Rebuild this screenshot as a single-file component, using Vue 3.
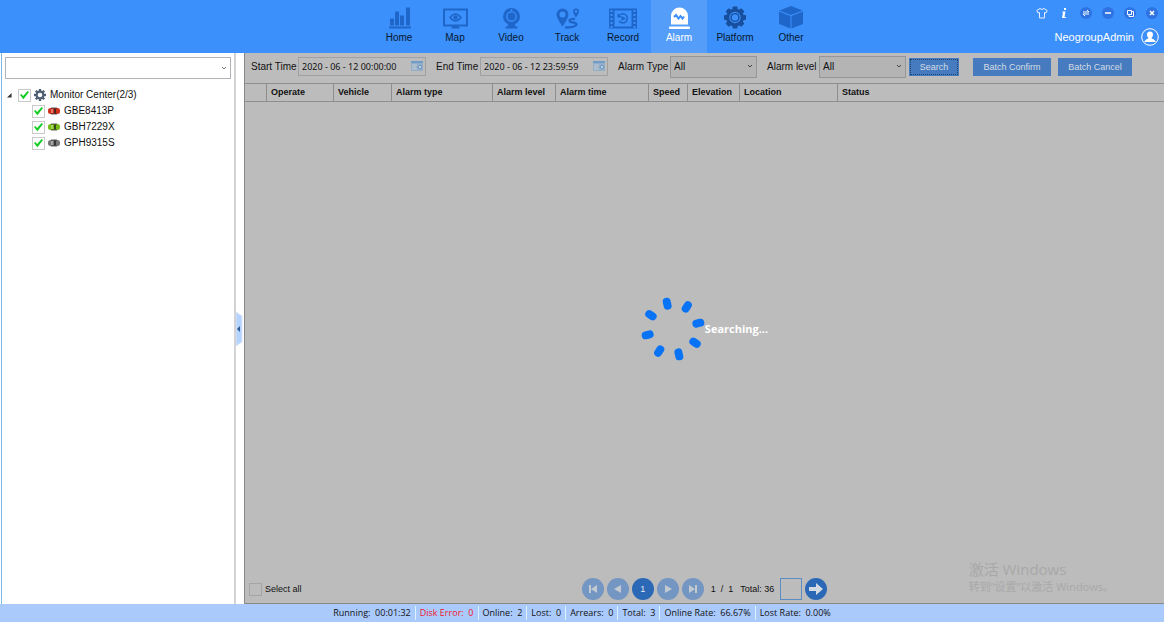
<script setup>
import { ref } from 'vue'

const nav = ['Home', 'Map', 'Video', 'Track', 'Record', 'Alarm', 'Platform', 'Other']
const active = ref('Alarm')
const vehicles = ref([
  { plate: 'GBE8413P', tone: 'red', on: true },
  { plate: 'GBH7229X', tone: 'green', on: true },
  { plate: 'GPH9315S', tone: 'grey', on: true }
])
const allOn = ref(true)
const selectAll = ref(false)
const group = ref('')
const start = ref('2020 - 06 - 12 00:00:00')
const end = ref('2020 - 06 - 12 23:59:59')
const page = ref('')
const columns = [
  { name: '', size: 'c-mark' },
  { name: 'Operate', size: 'c-operate' },
  { name: 'Vehicle', size: 'c-vehicle' },
  { name: 'Alarm type', size: 'c-type' },
  { name: 'Alarm level', size: 'c-level' },
  { name: 'Alarm time', size: 'c-time' },
  { name: 'Speed', size: 'c-speed' },
  { name: 'Elevation', size: 'c-elevation' },
  { name: 'Location', size: 'c-location' },
  { name: 'Status', size: 'rest' }
]
const status = [
  ['Running:', '00:01:32'],
  ['Disk Error:', '0'],
  ['Online:', '2'],
  ['Lost:', '0'],
  ['Arrears:', '0'],
  ['Total:', '3'],
  ['Online Rate:', '66.67%'],
  ['Lost Rate:', '0.00%']
]
const teeth = [0, 45, 90, 135, 180, 225, 270, 315]
const holes = [5, 9, 13, 17, 21]
</script>

<template>
  <div class="app">
    <header class="top">
      <nav class="nav">
        <button v-for="n in nav" :key="n" type="button" class="tab" :class="{ active: n === active }" @click="active = n">
          <svg class="tab-icon" viewBox="0 0 28 24" fill="#1f66ca" aria-hidden="true">
            <g v-if="n === 'Home'">
              <rect x="5" y="13" width="4" height="7" /><rect x="10" y="6" width="4" height="14" />
              <rect x="15" y="10" width="4" height="10" /><rect x="21" y="2" width="4" height="18" />
              <rect x="4" y="21" width="22" height="2" />
            </g>
            <g v-else-if="n === 'Map'">
              <rect x="3" y="4" width="23" height="16" fill="none" stroke="#1f66ca" stroke-width="2" />
              <path d="M9 12Q14.5 5 20 12Q14.5 19 9 12Z" fill="none" stroke="#1f66ca" stroke-width="1.5" />
              <circle cx="14.5" cy="12" r="2.3" /><path d="M12 20h5l2 3h-9z" />
            </g>
            <g v-else-if="n === 'Video'">
              <circle cx="14.5" cy="11" r="8.5" /><circle cx="14.5" cy="11" r="5.3" fill="#3b90fb" />
              <circle cx="14.5" cy="11" r="4" />
              <circle cx="14.5" cy="4.5" r="1" fill="#3b90fb" />
              <path d="M11.500 18h6l1 3h2v2H8.500v-2h2z" />
            </g>
            <g v-else-if="n === 'Track'">
              <path fill-rule="evenodd" d="M9.5 3a6 6 0 0 1 6 6c0 4-6 12-6 12s-6-8-6-12a6 6 0 0 1 6-6zm0 3a3 3 0 1 0 0 6a3 3 0 0 0 0-6z" />
              <path fill-rule="evenodd" d="M23 3a3 3 0 0 1 3 3c0 2-3 6-3 6s-3-4-3-6a3 3 0 0 1 3-3zm0 1.700a1.300 1.300 0 1 0 0 2.600a1.300 1.300 0 0 0 0-2.600z" />
              <path d="M22 13.500c-8-.5-6 3-2 3.500c6 .8 5 5-8 5" fill="none" stroke="#1f66ca" stroke-width="2.300" />
            </g>
            <g v-else-if="n === 'Record'">
              <path fill-rule="evenodd" d="M0 3h28v20H0zM5.500 5v16h17V5z" />
              <g v-for="y in holes" :key="y" fill="#3b90fb">
                <rect x="1.500" :y="y - 0.500" width="2" height="2" /><rect x="24.500" :y="y - 0.500" width="2" height="2" />
              </g>
              <path d="M10.500 9.500a4.600 4.600 0 1 1 -.5 6" fill="none" stroke="#1f66ca" stroke-width="1.500" />
              <path d="M8.500 7.500v4.500h4.500zM12.500 10.500l4.500 2.500l-4.500 2.500z" />
            </g>
            <g v-else-if="n === 'Alarm'" fill="#fff">
              <path d="M6 19V10.500a8.500 8.500 0 0 1 17 0V19z" /><rect x="4" y="21" width="21" height="2.500" rx="1" />
              <path d="M9 11.500l2-2l2.500 3.500l2-2.500l2 2.500l1.500-2" fill="none" stroke="#3b90fb" stroke-width="2" />
            </g>
            <g v-else-if="n === 'Platform'" fill="#174e9d" transform="translate(14 12)">
              <circle r="9" />
              <rect v-for="t in teeth" :key="t" x="-2.500" y="-11" width="5" height="5" rx="1" :transform="`rotate(${t})`" />
              <circle r="5.700" fill="#3b90fb" /><circle r="4.600" /><circle r="3.200" fill="#3b90fb" />
            </g>
            <g v-else>
              <path d="M14 0.500L25.500 5L14 9.500L2.500 5Z" /><path d="M2 6L13.500 10.500V23L2 18.500Z" /><path d="M14.500 10.500L26 6V18.500L14.500 23Z" />
            </g>
          </svg>
          <span>{{ n }}</span>
        </button>
      </nav>
      <div class="corner">
        <div class="tools">
          <button type="button" aria-label="Skin">
            <svg viewBox="0 0 12 12"><path d="M4 1.500L.8 3.500L2 6L3.500 5.500V11H8.500V5.500L10 6L11.200 3.500L8 1.500Q6 3.500 4 1.500Z" fill="none" stroke="#e6f1ff" /></svg>
          </button>
          <button type="button" aria-label="About">
            <svg viewBox="0 0 12 12"><path d="M6 1h2v2H6zM4.500 4.500h3L6.500 10H8v1H4l1-5.500h-.8z" fill="#fff" /></svg>
          </button>
          <button type="button" aria-label="Switch">
            <svg viewBox="0 0 12 12"><circle cx="6" cy="6" r="6" fill="#2f72e2" /><path d="M3 5h6L7 3M9 7H3l2 2" fill="none" stroke="#fff" /></svg>
          </button>
          <button type="button" aria-label="Minimize">
            <svg viewBox="0 0 12 12"><circle cx="6" cy="6" r="6" fill="#2f72e2" /><path d="M3 6h6" stroke="#fff" stroke-width="1.500" /></svg>
          </button>
          <button type="button" aria-label="Restore">
            <svg viewBox="0 0 12 12"><circle cx="6" cy="6" r="6" fill="#2f72e2" /><path d="M3.500 3.500h4v4h-4zM5 8v1.500h4.500v-5H8" fill="none" stroke="#fff" /></svg>
          </button>
          <button type="button" aria-label="Close">
            <svg viewBox="0 0 12 12"><circle cx="6" cy="6" r="6" fill="#2f72e2" /><path d="M4 4l4 4M8 4L4 8" stroke="#fff" stroke-width="1.500" /></svg>
          </button>
        </div>
        <a class="user" href="#">
          <span>NeogroupAdmin</span>
          <svg viewBox="0 0 18 18"><circle cx="9" cy="9" r="8.300" fill="none" stroke="#fff" /><path d="M9 3.500c4 0 3.500 5 1.500 6.500c0 1 4 1.300 4 4h-11c0-2.700 4-3 4-4C5.500 8.500 5 3.500 9 3.500z" fill="#fff" /></svg>
        </a>
      </div>
    </header>

    <div class="body">
      <aside class="side">
        <div class="combo">
          <input v-model="group" type="text" aria-label="Vehicle filter" />
          <svg class="chev" viewBox="0 0 6 6"><path d="M1 2l2 2l2-2" fill="none" stroke="#777" /></svg>
        </div>
        <div class="tree">
          <div class="root">
            <svg class="caret" viewBox="0 0 6 6"><path d="M5.500 0V5.500H0Z" fill="#333" /></svg>
            <label>
              <input v-model="allOn" class="tick" type="checkbox" />
              <svg class="gear" viewBox="-6 -6 12 12" fill="#4c5e72">
                <circle r="4.400" /><rect v-for="t in teeth" :key="t" x="-1.200" y="-6" width="2.400" height="3" :transform="`rotate(${t})`" />
                <circle r="2.300" fill="#fff" />
              </svg>
              <span>Monitor Center(2/3)</span>
            </label>
          </div>
          <label v-for="v in vehicles" :key="v.plate" class="leaf">
            <input v-model="v.on" class="tick" type="checkbox" />
            <svg class="car" :class="v.tone" viewBox="0 0 12 8">
              <rect y="1" width="12" height="6" rx="2.500" /><rect x="3" y="2" width="2" height="4" fill="#fff" opacity=".35" />
              <path d="M6 1.500h2v5H6z" fill="#222" opacity=".75" /><path d="M3 1h6M3 7h6" stroke="#333" stroke-width=".8" />
            </svg>
            <span>{{ v.plate }}</span>
          </label>
        </div>
      </aside>
      <div class="splitter">
        <button type="button" aria-label="Collapse panel">
          <svg viewBox="0 0 8 38"><path d="M0 2L6 6V32L0 36Z" fill="#b5d3ff" stroke="#dce6f5" /><path d="M4 16v6L1 19z" fill="#2d5b93" /></svg>
        </button>
      </div>

      <main class="main">
        <form class="filters" @submit.prevent>
          <label class="field"><span class="w-time">Start Time</span>
            <span class="date"><input v-model="start" type="text" />
              <svg viewBox="0 0 12 10"><path d="M0 0h12v10H0z" fill="#93adc7" /><path d="M0 0h12v2H0z" fill="#6f9cc8" /><path d="M1 4h5M1 6h4M1 8h5" stroke="#c3ccd4" /><circle cx="9" cy="6" r="1.700" fill="#bdd0e2" stroke="#6c99c4" /></svg>
            </span>
          </label>
          <label class="field"><span class="w-end">End Time</span>
            <span class="date"><input v-model="end" type="text" />
              <svg viewBox="0 0 12 10"><path d="M0 0h12v10H0z" fill="#93adc7" /><path d="M0 0h12v2H0z" fill="#6f9cc8" /><path d="M1 4h5M1 6h4M1 8h5" stroke="#c3ccd4" /><circle cx="9" cy="6" r="1.700" fill="#bdd0e2" stroke="#6c99c4" /></svg>
            </span>
          </label>
          <label class="field"><span class="w-sel">Alarm Type</span>
            <span class="pick"><select><option>All</option></select>
              <svg class="chev" viewBox="0 0 6 6"><path d="M1 2l2 2l2-2" fill="none" stroke="#444" /></svg></span>
          </label>
          <label class="field"><span class="w-sel">Alarm level</span>
            <span class="pick"><select><option>All</option></select>
              <svg class="chev" viewBox="0 0 6 6"><path d="M1 2l2 2l2-2" fill="none" stroke="#444" /></svg></span>
          </label>
          <div class="actions">
            <button class="btn search" type="submit">Search</button>
            <button class="btn confirm" type="button">Batch Confirm</button>
            <button class="btn cancel" type="button">Batch Cancel</button>
          </div>
        </form>

        <table class="grid">
          <thead>
            <tr><th v-for="c in columns" :key="c.name" :class="c.size" scope="col">{{ c.name }}</th></tr>
          </thead>
        </table>

        <div class="results">
          <div class="loading" role="status">
            <svg viewBox="-32 -34 64 68"><rect v-for="t in teeth" :key="t" x="20" y="-4" width="12" height="8" rx="4" fill="#0874f5" :transform="`rotate(${t - 13})`" /></svg>
            <span>Searching...</span>
          </div>
        </div>

        <div class="pager">
          <label class="all"><input v-model="selectAll" class="tick plain" type="checkbox" /><span>Select all</span></label>
          <div class="pages">
            <button class="dot" type="button" disabled aria-label="First"><svg viewBox="0 0 12 12"><path d="M2 2h2v8H2zM10 2v8L4 6z" /></svg></button>
            <button class="dot" type="button" disabled aria-label="Previous"><svg viewBox="0 0 12 12"><path d="M9 2v8L2 6z" /></svg></button>
            <button class="dot on" type="button">1</button>
            <button class="dot" type="button" disabled aria-label="Next"><svg viewBox="0 0 12 12"><path d="M3 2v8l7-4z" /></svg></button>
            <button class="dot" type="button" disabled aria-label="Last"><svg viewBox="0 0 12 12"><path d="M2 2v8l6-4zM8 2h2v8H8z" /></svg></button>
            <span class="count">1&nbsp; /&nbsp; 1</span>
            <span class="total">Total: 36</span>
            <input v-model="page" class="goto" type="text" aria-label="Page number" />
            <button class="dot on" type="button" aria-label="Go"><svg class="go" viewBox="0 0 16 16"><path d="M1 6h7V2l7 6l-7 6v-4H1z" /></svg></button>
          </div>
        </div>
        <div class="notice">
          <p class="big">激活 Windows</p>
          <p>转到“设置”以激活 Windows。</p>
        </div>
      </main>
    </div>

    <footer class="foot">
      <span v-for="s in status" :key="s[0]" :class="{ bad: s[0] === 'Disk Error:' }">{{ s[0] }}&nbsp; {{ s[1] }}</span>
    </footer>
  </div>
</template>

<style>
body { margin: 0; }
</style>

<style scoped>
.app {
  display: flex;
  flex-direction: column;
  min-height: 100vh;
  font: 10px/16px "Liberation Sans", Arial, sans-serif;
  color: #111;
  background: #fff;
}
.app *, .app *::before { box-sizing: border-box; }
button, input, select { font: inherit; color: inherit; margin: 0; padding: 0; border: 0; background: none; border-radius: 0; }
svg { display: block; flex: none; }

.top { display: grid; grid-template-columns: 1fr auto 1fr; height: 53px; padding-left: 26px; background: #3b90fb; }
.nav { grid-column: 2; display: flex; }
.tab { display: flex; flex-direction: column; align-items: center; width: 56px; height: 53px; padding-top: 5px; color: #06182f; }
.tab-icon { width: 28px; height: 25px; }
.tab.active { background: #549efa; color: #fff; }
.corner { display: flex; flex-direction: column; align-items: flex-end; padding: 7px 5px 0 0; }
.tools { display: flex; gap: 10px; padding-right: 1px; }
.tools svg { width: 12px; height: 12px; }
.user { display: flex; align-items: center; gap: 7px; margin-top: 9px; font-size: 11px; color: #fff; text-decoration: none; }
.user svg { width: 18px; height: 18px; }

.body { flex: 1; display: flex; }
.side { width: 235px; margin-left: 1px; padding: 4px 3px 0; border-left: 1px solid #7cb8e6; border-right: 2px solid #d3d3d6; }
.combo { position: relative; height: 22px; border: 1px solid #b3b3b9; }
.combo input { width: 100%; height: 20px; padding: 0 18px 0 4px; }
.chev { position: absolute; right: 3px; top: 7px; width: 6px; height: 6px; }
.tree { padding: 8px 0 0 2px; }
.tree label { display: flex; align-items: center; }
.root { display: flex; align-items: center; height: 16px; }
.caret { width: 5px; height: 5px; margin-right: 6px; }
.gear { width: 12px; height: 12px; margin: 0 4px 0 3px; }
.leaf { height: 16px; padding-left: 25px; }
.car { width: 12px; height: 8px; margin: 0 4px 0 3px; }
.red { fill: #d0301c; }
.green { fill: #78bc16; }
.grey { fill: #777; }
.tick { appearance: none; flex: none; width: 13px; height: 13px; border: 1px solid #c9c9c9; background: #fff; }
.tick:checked::before { content: ""; display: block; width: 9px; height: 9px; margin: 1px; background: #10cc20; clip-path: polygon(0 50%, 15% 38%, 35% 60%, 85% 5%, 100% 17%, 38% 98%); }
.tick.plain { border-color: #a5a5a5; background: #bcbcbc; }
.splitter { width: 8px; display: flex; align-items: center; }
.splitter svg { width: 8px; height: 38px; }

.main { position: relative; flex: 1; min-width: 0; display: flex; flex-direction: column; background: #bcbcbc; border-left: 1px solid #888; border-bottom: 1px solid #888; }
.filters { display: flex; align-items: center; gap: 10px; height: 30px; padding: 0 0 3px 6px; white-space: nowrap; }
.field { display: flex; align-items: center; }
.w-time { width: 47px; }
.w-end { width: 44px; }
.w-sel { width: 52px; }
.date { position: relative; width: 128px; height: 19px; border: 1px solid #a0a0a0; }
.date input { width: 100%; height: 17px; padding: 0 20px 0 3px; font-family: "Noto Sans", "Open Sans", sans-serif; font-size: 9px; }
.date svg { position: absolute; right: 2px; top: 3px; width: 12px; height: 10px; }
.pick { position: relative; width: 87px; height: 22px; }
.pick select { appearance: none; width: 100%; height: 22px; padding: 0 16px 0 3px; border: 1px solid #969696; background: #b4b4b4; }
.pick .chev { right: 4px; }
.actions { display: flex; gap: 7px; margin-left: -7px; font-size: 9px; }
.btn { height: 18px; background: #467bbf; color: #d5dce5; }
.search { width: 50px; margin-right: 7px; outline: 1px dotted #1f436f; outline-offset: -2px; }
.confirm { width: 78px; }
.cancel { width: 74px; }

.grid { width: 100%; table-layout: fixed; border-collapse: separate; border-spacing: 0; }
.grid th { height: 19px; padding: 0 0 2px 4px; border: 1px solid #8e8e8e; border-width: 1px 1px 1px 0; font-size: 9px; line-height: 14px; text-align: left; white-space: nowrap; }
.grid .rest { border-right: 0; width: auto; }
.c-mark { width: 22px; }
.c-operate { width: 67px; }
.c-vehicle { width: 58px; }
.c-type { width: 101px; }
.c-level { width: 63px; }
.c-time { width: 93px; }
.c-speed { width: 39px; }
.c-elevation { width: 52px; }
.c-location { width: 98px; }

.results { flex: 1; display: flex; align-items: center; justify-content: center; }
.loading { display: flex; align-items: center; color: #fff; font: bold 11px/16px "Open Sans", "Noto Sans", sans-serif; padding-bottom: 20px; }
.loading svg { width: 64px; height: 68px; }

.pager { display: grid; grid-template-columns: 1fr auto 1fr; align-items: center; height: 28px; padding: 0 4px; }
.all { display: flex; align-items: center; gap: 3px; font-size: 9px; }
.pages { display: flex; align-items: center; gap: 3px; font-size: 9px; }
.dot { display: grid; place-items: center; width: 22px; height: 22px; border-radius: 50%; background: #7496c2; color: #e3e7ec; }
.dot svg { width: 12px; height: 12px; fill: #c3c9d0; }
.dot.on { background: #2b69b7; }
.dot .go { width: 16px; height: 16px; fill: #d4dae2; }
.count { margin: 0 4px; }
.goto { width: 22px; height: 22px; margin-left: 3px; border: 1px solid #5d8cc4; text-align: center; }
.notice { position: absolute; right: 50px; bottom: 8px; color: #a8a8a8; font: 11px/16px "Open Sans", "Noto Sans CJK SC", sans-serif; pointer-events: none; }
.notice p { margin: 0; }
.notice .big { font-size: 15px; line-height: 20px; }

.foot { display: flex; justify-content: center; align-items: center; height: 18px; background: #abcafc; font: 9px/14px "Open Sans", "Noto Sans", sans-serif; }
.foot span { padding: 0 4px; border-left: 1px solid #dcf0ff; }
.foot span:first-child { border-left: 0; }
.foot .bad { color: #f0142a; }
</style>
